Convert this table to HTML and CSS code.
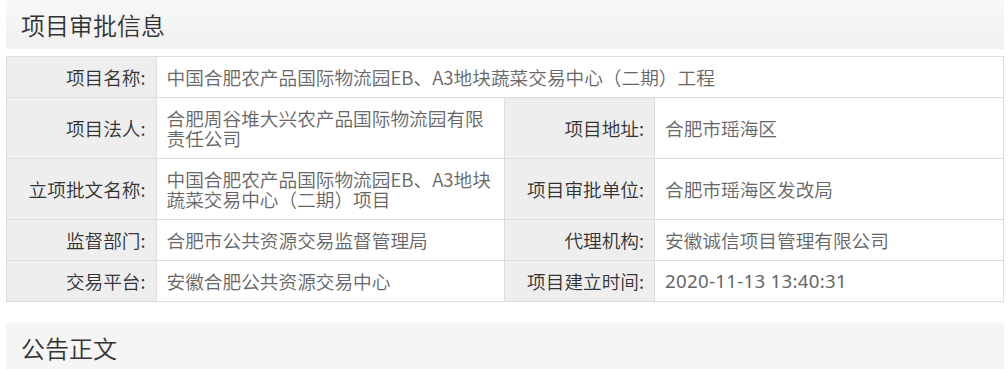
FILE: index.html
```html
<!DOCTYPE html>
<html lang="zh-CN">
<head>
<meta charset="utf-8">
<title>项目审批信息</title>
<link rel="stylesheet" href="styles.css">
</head>
<body>
<div class="page">
  <h2 class="section-title">项目审批信息</h2>
  <table class="info">
    <colgroup>
      <col class="c-label"><col class="c-value"><col class="c-label"><col class="c-value">
    </colgroup>
    <tr>
      <th>项目名称:</th>
      <td colspan="3">中国合肥农产品国际物流园EB、A3地块蔬菜交易中心（二期）工程</td>
    </tr>
    <tr>
      <th>项目法人:</th>
      <td>合肥周谷堆大兴农产品国际物流园有限责任公司</td>
      <th>项目地址:</th>
      <td>合肥市瑶海区</td>
    </tr>
    <tr>
      <th>立项批文名称:</th>
      <td>中国合肥农产品国际物流园EB、A3地块蔬菜交易中心（二期）项目</td>
      <th>项目审批单位:</th>
      <td>合肥市瑶海区发改局</td>
    </tr>
    <tr>
      <th>监督部门:</th>
      <td>合肥市公共资源交易监督管理局</td>
      <th>代理机构:</th>
      <td>安徽诚信项目管理有限公司</td>
    </tr>
    <tr>
      <th>交易平台:</th>
      <td>安徽合肥公共资源交易中心</td>
      <th>项目建立时间:</th>
      <td class="datetime">2020-11-13 13:40:31</td>
    </tr>
  </table>
  <h2 class="section-title section-title--plain">公告正文</h2>
</div>
</body>
</html>
```
FILE: styles.css
```css
html, body {
  margin: 0;
  padding: 0;
  background: #fff;
}
body {
  font-family: "Noto Sans CJK SC", "Noto Sans", sans-serif;
  color: #333;
}
.page {
  margin: 0 4px 0 6px;
}
.section-title {
  margin: 0;
  height: 49px;
  line-height: 49px;
  padding-left: 15px;
  font-size: 24px;
  font-weight: 350;
  color: #333;
  background: linear-gradient(#f8f8f8, #f0f0f0);
}
.section-title--plain {
  margin-top: 21px;
  background: #f5f5f5;
}
.info {
  width: 100%;
  margin-top: 7px;
  border-collapse: collapse;
  table-layout: fixed;
  font-size: 18.67px;
  line-height: 20px;
  font-weight: 350;
}
.c-label { width: 15%; }
.c-value { width: 35%; }
.info th,
.info td {
  border: 1px solid #ddd;
  padding: 10px 10px;
  vertical-align: middle;
}
.info th {
  background: #eee;
  font-weight: 350;
  text-align: right;
  color: #333;
  white-space: nowrap;
}
.info td {
  text-align: left;
  color: #666;
}
.info .datetime {
  font-family: "Noto Sans", "Noto Sans CJK SC", sans-serif;
  font-weight: 400;
  letter-spacing: 0.3px;
}
```
